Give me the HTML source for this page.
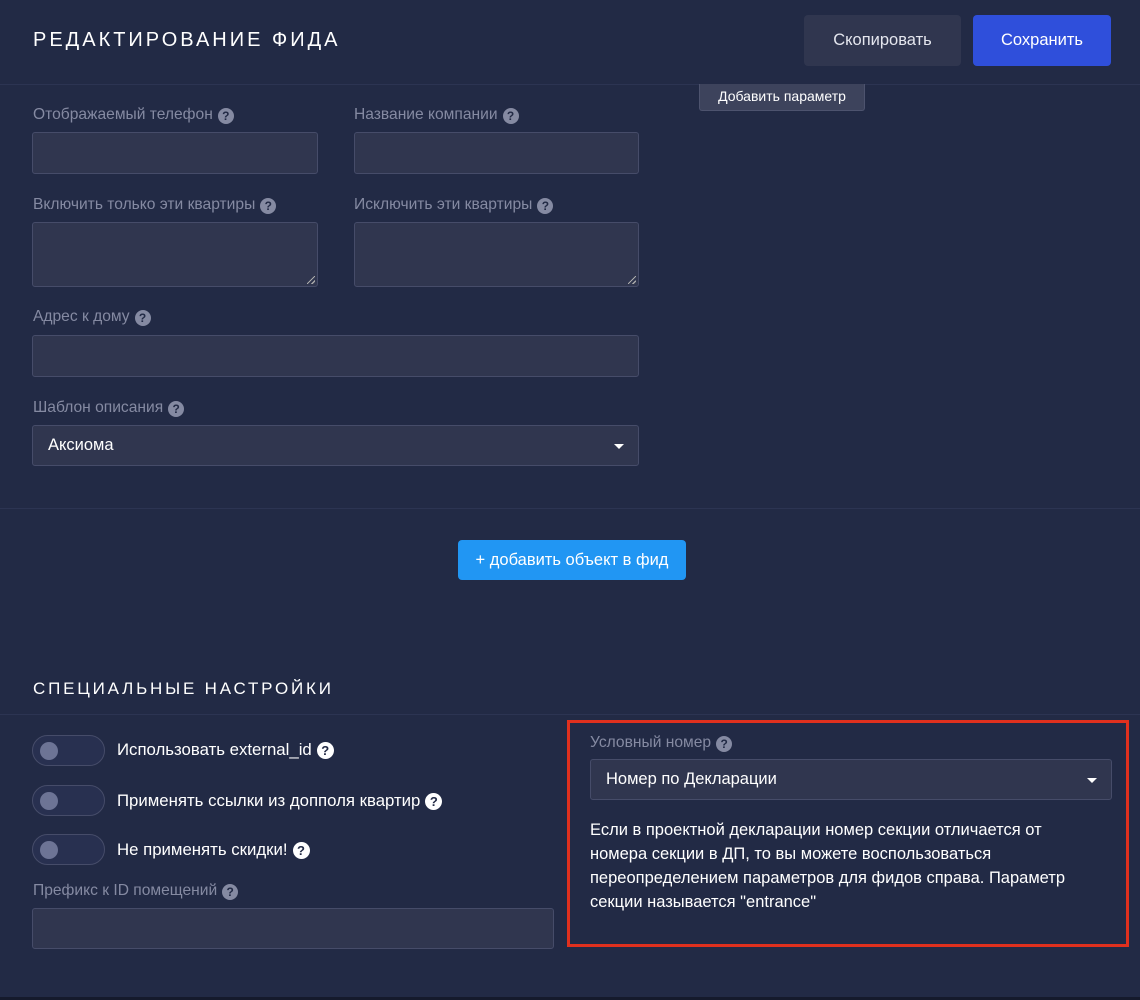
<!DOCTYPE html>
<html><head><meta charset="utf-8"><style>
*{box-sizing:border-box;margin:0;padding:0}
body{width:1140px;height:1000px;background:#222a45;font-family:"Liberation Sans",Arial,sans-serif;position:relative;overflow:hidden;color:#fff}
.a{position:absolute}
.line{position:absolute;left:0;width:1140px;height:1px;background:#2c3452}
.lbl{position:absolute;font-size:15.6px;color:#858aa2;line-height:18px;white-space:nowrap}
.q{display:inline-block;width:16px;height:16px;border-radius:50%;background:#858aa2;color:#222a45;font-size:12px;font-weight:bold;text-align:center;line-height:16px;vertical-align:-1px;margin-left:5px}
.q.w{background:#fff;width:17px;height:17px;line-height:17px;font-size:13px;vertical-align:0}
.inp{position:absolute;background:#30364f;border:1px solid #464c69;border-radius:3px}
.sel{font-size:16.5px;color:#fff;padding-left:15px;display:flex;align-items:center}
.caret{position:absolute;right:14px;top:50%;margin-top:-2px;width:0;height:0;border-left:5px solid transparent;border-right:5px solid transparent;border-top:5px solid #fff}
.tg{position:absolute;left:32px;width:73px;height:31px;border-radius:16px;border:1px solid #464c69;background:#283050}
.tg::after{content:"";position:absolute;left:7px;top:6px;width:18px;height:18px;border-radius:50%;background:#6d7495}
.tl{position:absolute;left:117px;font-size:16.8px;color:#fff;white-space:nowrap;line-height:20px}
.rs{position:absolute;right:2px;bottom:2px;width:8px;height:8px;background:linear-gradient(135deg,transparent 45%,#aaa 45%,#aaa 55%,transparent 55%,transparent 75%,#aaa 75%,#aaa 85%,transparent 85%)}
</style></head><body>
<div class="a" style="left:33px;top:29px;font-size:20px;letter-spacing:3px;line-height:22px">РЕДАКТИРОВАНИЕ ФИДА</div>
<div class="a" style="left:804px;top:15px;width:157px;height:51px;background:#30364f;border-radius:4px;font-size:16.5px;line-height:51px;text-align:center;color:#e4e6ee">Скопировать</div>
<div class="a" style="left:973px;top:15px;width:138px;height:51px;background:#2f4fdb;border-radius:4px;font-size:16.5px;line-height:51px;text-align:center">Сохранить</div>
<div class="line" style="top:84px"></div>
<div class="a" style="left:699px;top:84px;width:166px;height:27px;background:#3d435c;border:1px solid #4d536e;border-top:none;border-radius:0 0 3px 3px;font-size:14px;line-height:24px;text-align:center">Добавить параметр</div>

<div class="lbl" style="left:33px;top:106px">Отображаемый телефон<span class="q">?</span></div>
<div class="lbl" style="left:354px;top:106px">Название компании<span class="q">?</span></div>
<div class="inp" style="left:32px;top:132px;width:286px;height:42px"></div>
<div class="inp" style="left:354px;top:132px;width:285px;height:42px"></div>
<div class="lbl" style="left:33px;top:196px">Включить только эти квартиры<span class="q">?</span></div>
<div class="lbl" style="left:354px;top:196px">Исключить эти квартиры<span class="q">?</span></div>
<div class="inp" style="left:32px;top:222px;width:286px;height:65px"><div class="rs"></div></div>
<div class="inp" style="left:354px;top:222px;width:285px;height:65px"><div class="rs"></div></div>
<div class="lbl" style="left:33px;top:308px">Адрес к дому<span class="q">?</span></div>
<div class="inp" style="left:32px;top:335px;width:607px;height:42px"></div>
<div class="lbl" style="left:33px;top:399px">Шаблон описания<span class="q">?</span></div>
<div class="inp sel" style="left:32px;top:425px;width:607px;height:41px">Аксиома<div class="caret"></div></div>
<div class="line" style="top:508px"></div>
<div class="a" style="left:458px;top:540px;width:228px;height:40px;background:#2196f3;border-radius:4px;font-size:16.5px;line-height:40px;text-align:center">+ добавить объект в фид</div>

<div class="a" style="left:33px;top:679px;font-size:17px;letter-spacing:2.8px;line-height:20px">СПЕЦИАЛЬНЫЕ НАСТРОЙКИ</div>
<div class="line" style="top:714px"></div>
<div class="tg" style="top:735px"></div><div class="tl" style="top:740px">Использовать external_id<span class="q w">?</span></div>
<div class="tg" style="top:785px"></div><div class="tl" style="top:791px">Применять ссылки из допполя квартир<span class="q w">?</span></div>
<div class="tg" style="top:834px"></div><div class="tl" style="top:840px">Не применять скидки!<span class="q w">?</span></div>
<div class="lbl" style="left:33px;top:882px">Префикс к ID помещений<span class="q">?</span></div>
<div class="inp" style="left:32px;top:908px;width:522px;height:41px"></div>

<div class="a" style="left:567px;top:720px;width:562px;height:227px;border:3px solid #e0301e"></div>
<div class="lbl" style="left:590px;top:734px">Условный номер<span class="q">?</span></div>
<div class="inp sel" style="left:590px;top:759px;width:522px;height:41px">Номер по Декларации<div class="caret"></div></div>
<div class="a" style="left:590px;top:818px;width:480px;font-size:16.5px;line-height:24px;color:#fff">Если в проектной декларации номер секции отличается от номера секции в ДП, то вы можете воспользоваться переопределением параметров для фидов справа. Параметр секции называется "entrance"</div>
<div class="a" style="left:0;top:997px;width:1140px;height:3px;background:#151a2c"></div>
</body></html>
